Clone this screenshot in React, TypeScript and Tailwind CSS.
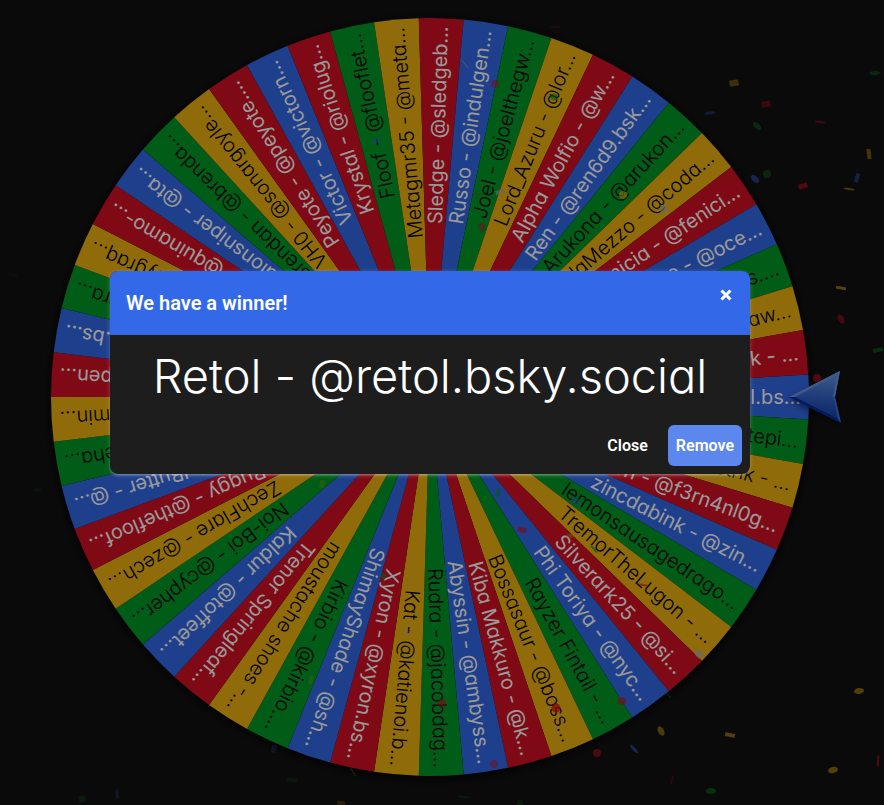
const RED = '#d50f25';
const BLUE = '#3369e8';
const GREEN = '#009925';
const YELLOW = '#eeb211';
const GREY = '#b0b0b0';

const sliceColors = [BLUE, GREEN, YELLOW, RED];

// the color cycle restarts here, this slice is red so that two blues don't touch
const FIRST_ENTRY = 37;

function colorOf(i: number) {
  if (i === FIRST_ENTRY) return RED;
  const n = i > FIRST_ENTRY ? i - FIRST_ENTRY : i;
  return sliceColors[n % sliceColors.length];
}

const entries = [
  'Retol - @retol.bs...',
  'Tepig - @tepi...',
  'Matt Strik - ...',
  'Fern - @f3rn4nl0g...',
  'zincdabink - @zin...',
  'lemonsausagedrago...',
  'TremorTheLugon - ...',
  'Silverark25 - @si...',
  'Phi Toriya - @nyc...',
  'Rayzer Fintail - ...',
  'Bossasaur - @boss...',
  'Kiba Makkuro - @k...',
  'Abyssin - @ambyss...',
  'Rudra - @jacobdag...',
  'Kat - @katienoi.b...',
  'Xyron - @xyron.bs...',
  'ShimayShade - @sh...',
  'Kirbio - @kirbio....',
  'moustache shoes -...',
  'Trenor Springleaf...',
  'Kaldur - @toffeet...',
  'Noi-Boi - @cypher...',
  'ZechFlare - @zech...',
  'Buggy - @thefloof...',
  'MelButter - @...',
  'Neha - @neha...',
  'Ermin - @ermin...',
  'Aspen - @aedpen...',
  'Ash - @ash6.bs...',
  'Lyra - @lyra...',
  'Cy - @cygraq...',
  'Quin - @quinamo-...',
  'Talonsniper - @ta...',
  'Brendan - @brenda...',
  'VH0 - @sonargoyle...',
  'Peyote - @peyote....',
  'Victor - @victorn...',
  'Krystal - @riolug...',
  'Floof - @flooflet...',
  'Metagmr35 - @meta...',
  'Sledge - @sledgeb...',
  'Russo - @indulgen...',
  'Joel - @joelthegw...',
  'Lord_Azuru - @lor...',
  'Alpha Wolfio - @w...',
  'Ren - @ren6d9.bsk...',
  'Arukona - @arukon...',
  'CodaMezzo - @coda...',
  'Fenicia - @fenici...',
  'Orange - @oce...',
  'Iris - @iris....',
  'Shaw - @shaw...',
  'Duskclaw Rick - ...',
];

const RADIUS = 379;
const STEP = 360 / entries.length;

// [shape, x, y, width, height, rotation, color, opacity]
type Piece = ['rect' | 'oval', number, number, number, number, number, string, number];

const confetti: Piece[] = [
  ['rect', 734, 83, 9, 6, -10, YELLOW, 0.4],
  ['rect', 766, 104, 9, 6, -10, RED, 0.4],
  ['oval', 875, 73, 11, 4, 0, GREEN, 0.4],
  ['oval', 710, 113, 11, 3, -8, BLUE, 0.35],
  ['oval', 757, 126, 10, 5, 45, GREEN, 0.4],
  ['oval', 820, 122, 11, 2, 8, RED, 0.45],
  ['rect', 869, 154, 4, 10, -8, YELLOW, 0.45],
  ['oval', 767, 174, 8, 8, 0, GREEN, 0.35],
  ['oval', 755, 179, 10, 6, 42, BLUE, 0.5],
  ['rect', 857, 178, 4, 9, 18, BLUE, 0.45],
  ['rect', 803, 186, 9, 5, -18, RED, 0.6],
  ['oval', 849, 189, 11, 2, 8, YELLOW, 0.5],
  ['oval', 623, 195, 8, 8, 0, YELLOW, 0.6],
  ['oval', 664, 209, 8, 8, 30, GREY, 0.6],
  ['rect', 595, 266, 3, 8, 15, GREY, 0.4],
  ['rect', 841, 288, 10, 3, 10, YELLOW, 0.6],
  ['oval', 841, 319, 6, 10, -30, RED, 0.5],
  ['rect', 878, 350, 10, 4, -12, GREEN, 0.45],
  ['oval', 817, 378, 8, 8, 0, RED, 0.6],
  ['oval', 859, 691, 10, 6, -8, YELLOW, 0.55],
  ['oval', 661, 731, 6, 10, -28, YELLOW, 0.5],
  ['rect', 730, 735, 10, 4, 10, YELLOW, 0.55],
  ['oval', 597, 753, 8, 8, 0, RED, 0.55],
  ['oval', 634, 749, 11, 3, 48, BLUE, 0.55],
  ['oval', 833, 770, 10, 6, -15, YELLOW, 0.55],
  ['oval', 711, 791, 10, 6, 0, GREEN, 0.5],
  ['rect', 878, 761, 2, 11, 3, RED, 0.6],
  ['rect', 672, 780, 1, 9, 20, RED, 0.4],
  ['oval', 699, 654, 9, 7, 40, GREY, 0.7],
  ['oval', 622, 701, 9, 8, 0, RED, 0.6],
  ['rect', 668, 695, 8, 1, 40, GREEN, 0.5],
  ['rect', 594, 549, 9, 2, 50, GREEN, 0.7],
  ['rect', 643, 585, 9, 2, 10, RED, 0.6],
  ['rect', 575, 501, 8, 5, 20, BLUE, 0.6],
  ['rect', 570, 536, 8, 4, -15, YELLOW, 0.35],
  ['oval', 498, 493, 4, 10, 10, GREEN, 0.6],
  ['rect', 522, 530, 9, 5, 12, RED, 0.6],
  ['oval', 556, 708, 9, 9, 0, RED, 0.75],
  ['oval', 442, 703, 8, 8, 0, RED, 0.6],
  ['oval', 494, 764, 8, 8, 40, RED, 0.5],
  ['rect', 383, 576, 6, 6, 20, GREEN, 0.5],
  ['oval', 405, 632, 8, 8, 0, GREY, 0.15],
  ['rect', 322, 484, 5, 8, 5, YELLOW, 0.2],
  ['rect', 311, 680, 4, 8, 15, YELLOW, 0.2],
  ['rect', 341, 803, 8, 4, 5, YELLOW, 0.2],
  ['oval', 464, 797, 11, 2, 5, GREEN, 0.25],
  ['rect', 353, 772, 9, 1, 55, YELLOW, 0.3],
  ['rect', 520, 803, 5, 5, 0, GREEN, 0.2],
  ['rect', 292, 780, 10, 4, 8, GREEN, 0.15],
  ['rect', 274, 749, 5, 8, 8, BLUE, 0.2],
  ['rect', 117, 794, 3, 9, -10, BLUE, 0.2],
  ['rect', 82, 799, 7, 6, -15, GREEN, 0.2],
  ['rect', 13, 275, 9, 3, 5, GREEN, 0.08],
  ['rect', 38, 490, 8, 3, 0, GREEN, 0.1],
  ['oval', 495, 84, 8, 8, 0, RED, 0.45],
  ['rect', 465, 64, 10, 1, 50, GREY, 0.5],
  ['rect', 500, 192, 9, 4, -12, GREY, 0.6],
  ['oval', 482, 227, 6, 9, -30, RED, 0.5],
  ['rect', 376, 141, 7, 4, -20, BLUE, 0.6],
  ['rect', 555, 27, 10, 1, 0, RED, 0.3],
  ['oval', 554, 97, 7, 7, 0, GREEN, 0.6],
  ['rect', 477, 194, 10, 1, 0, RED, 0.4],
];

function slicePath(step: number) {
  const half = (step / 2) * (Math.PI / 180);
  const x = RADIUS * Math.cos(half);
  const y = RADIUS * Math.sin(half);
  return `M0 0 L${x} ${-y} A${RADIUS} ${RADIUS} 0 0 1 ${x} ${y} Z`;
}

function Wheel() {
  const path = slicePath(STEP);
  return (
    <svg
      viewBox="0 0 758 758"
      className="w-full max-w-[758px] overflow-visible font-['Inter',sans-serif] [font-feature-settings:'cv11']"
    >
      <circle cx="379" cy="381" r="381" fill="#000" className="blur-[4px]" opacity="0.7" />
      <g transform="translate(379 379)">
        {entries.map((entry, i) => {
          const color = colorOf(i);
          const dark = color === GREEN || color === YELLOW;
          return (
            <g key={entry} transform={`rotate(${i * STEP})`}>
              <path d={path} fill={color} />
              <text
                x="371"
                y="7"
                textAnchor="end"
                className={dark ? 'fill-black text-[20px] font-light' : 'fill-white text-[20px] font-normal'}
              >
                {entry}
              </text>
            </g>
          );
        })}
      </g>
    </svg>
  );
}

function Confetti() {
  return (
    <svg
      viewBox="0 0 884 805"
      preserveAspectRatio="xMidYMin slice"
      className="absolute inset-0 h-full w-full"
      aria-hidden="true"
    >
      {confetti.map(([shape, x, y, w, h, angle, color, opacity], i) => (
        <g key={i} transform={`translate(${x} ${y}) rotate(${angle})`} fill={color} opacity={opacity}>
          {shape === 'oval' ? (
            <ellipse rx={w / 2} ry={h / 2} />
          ) : (
            <rect x={-w / 2} y={-h / 2} width={w} height={h} />
          )}
        </g>
      ))}
    </svg>
  );
}

function Pointer() {
  return (
    <svg
      viewBox="0 0 60 60"
      className="absolute top-1/2 -right-9 size-[60px] -translate-y-1/2 overflow-visible"
      aria-hidden="true"
    >
      <defs>
        <linearGradient id="face" x1="0.7" y1="0" x2="0.6" y2="1">
          <stop offset="0" stopColor="#6a97ea" />
          <stop offset="0.5" stopColor="#3565cc" />
          <stop offset="1" stopColor="#0b389c" />
        </linearGradient>
      </defs>
      <path d="M5 33 L54 8 L50 33 L56 59 Z" fill="#000" opacity="0.5" className="blur-[3px]" />
      <path d="M4 30 L55 4 L50 30 L56 56 Z" fill="url(#face)" />
      <path d="M4 30 L55 4 L52 8 L10 30 Z" fill="#6c95e4" />
      <path d="M4 30 L10 30 L53 52 L56 56 Z" fill="#062aa0" />
      <path d="M55 4 L50 30 L48 30 L52 8 Z" fill="#6d94de" />
      <path d="M50 30 L56 56 L53 52 L48 30 Z" fill="#3f6fd2" />
    </svg>
  );
}

function WinnerDialog() {
  return (
    <div
      role="dialog"
      aria-labelledby="winner-title"
      className="w-full max-w-[640px] overflow-hidden rounded-lg bg-[#1d1d1d] text-white shadow-[0_1px_5px_rgba(255,255,255,0.2),0_2px_2px_rgba(255,255,255,0.14),0_3px_1px_-2px_rgba(255,255,255,0.12)]"
    >
      <div className="flex items-start justify-between bg-[#3369e8]">
        <h2 id="winner-title" className="p-4 text-xl leading-8 font-semibold">
          We have a winner!
        </h2>
        <button type="button" aria-label="Close dialog" className="p-4">
          <svg viewBox="0 0 16 16" className="size-4" stroke="currentColor" strokeWidth="3">
            <path d="M3.5 3.5 L12.5 12.5 M12.5 3.5 L3.5 12.5" />
          </svg>
        </button>
      </div>
      <div className="px-4 py-4 text-center font-['Inter',sans-serif] text-[47px] leading-[50px] font-light [font-feature-settings:'cv11']">
        Retol - @retol.bsky.social
      </div>
      <div className="flex justify-end gap-3 p-2 font-semibold">
        <button type="button" className="h-[41px] rounded-md px-2">
          Close
        </button>
        <button type="button" className="h-[41px] rounded-md bg-[#5c87ed] px-2">
          Remove
        </button>
      </div>
    </div>
  );
}

export default function App() {
  return (
    <div className="relative min-h-screen overflow-hidden bg-[#121212] font-['Roboto',sans-serif]">
      <main className="flex justify-center pt-[18px] pr-6">
        <div className="relative flex w-full max-w-[758px]">
          <Wheel />
          <Pointer />
        </div>
      </main>
      <Confetti />
      <div className="absolute inset-0 flex items-center justify-center bg-black/40 pr-6 pb-[60px]">
        <WinnerDialog />
      </div>
    </div>
  );
}
